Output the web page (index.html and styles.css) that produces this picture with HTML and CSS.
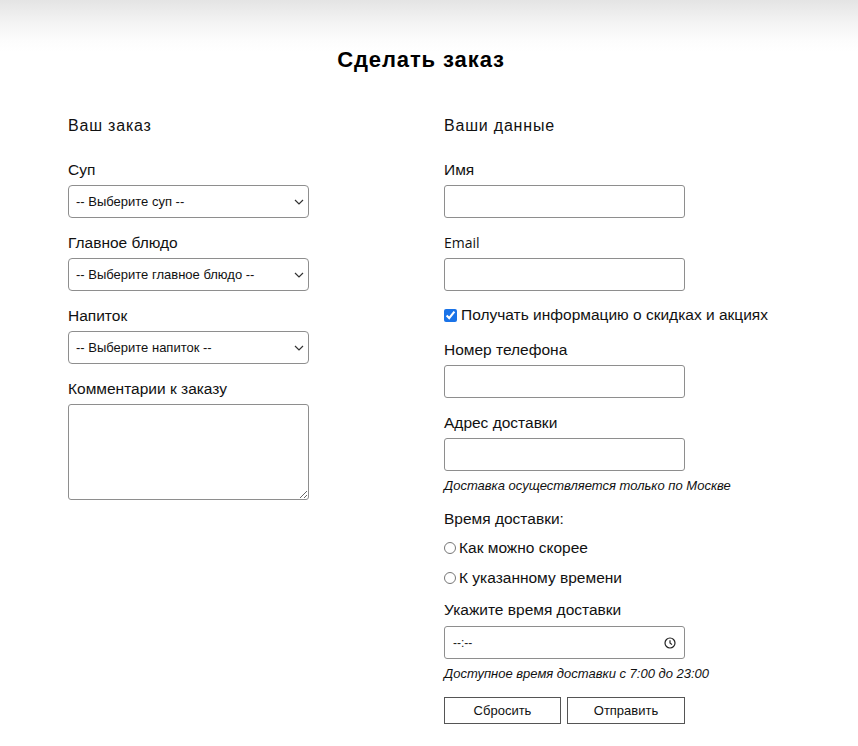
FILE: index.html
```html
<!DOCTYPE html>
<html lang="ru">
<head>
<meta charset="utf-8">
<title>Сделать заказ</title>
<link rel="stylesheet" href="styles.css">
</head>
<body>
<header class="top">
  <h1 class="title">Сделать заказ</h1>
</header>
<form class="order">
  <section class="col">
    <h2 class="col-title">Ваш заказ</h2>
    <div class="field">
      <label class="label" for="soup">Суп</label>
      <div class="select-wrap">
        <select id="soup" class="select"><option>-- Выберите суп --</option></select>
        <svg class="chev" width="10" height="6" viewBox="0 0 10 6"><path d="M1 1l4 4 4-4" fill="none" stroke="#333" stroke-width="1.2"/></svg>
      </div>
    </div>
    <div class="field">
      <label class="label" for="main">Главное блюдо</label>
      <div class="select-wrap">
        <select id="main" class="select"><option>-- Выберите главное блюдо --</option></select>
        <svg class="chev" width="10" height="6" viewBox="0 0 10 6"><path d="M1 1l4 4 4-4" fill="none" stroke="#333" stroke-width="1.2"/></svg>
      </div>
    </div>
    <div class="field">
      <label class="label" for="drink">Напиток</label>
      <div class="select-wrap">
        <select id="drink" class="select"><option>-- Выберите напиток --</option></select>
        <svg class="chev" width="10" height="6" viewBox="0 0 10 6"><path d="M1 1l4 4 4-4" fill="none" stroke="#333" stroke-width="1.2"/></svg>
      </div>
    </div>
    <div class="field">
      <label class="label" for="comment">Комментарии к заказу</label>
      <textarea id="comment" class="textarea"></textarea>
    </div>
  </section>
  <section class="col">
    <h2 class="col-title">Ваши данные</h2>
    <div class="field">
      <label class="label" for="name">Имя</label>
      <input id="name" class="input" type="text">
    </div>
    <div class="field">
      <label class="label latin" for="email">Email</label>
      <input id="email" class="input" type="text">
    </div>
    <label class="check-row"><input type="checkbox" class="check" checked> Получать информацию о скидках и акциях</label>
    <div class="field">
      <label class="label" for="phone">Номер телефона</label>
      <input id="phone" class="input" type="text">
    </div>
    <div class="field field-tight">
      <label class="label" for="addr">Адрес доставки</label>
      <input id="addr" class="input" type="text">
      <p class="note">Доставка осуществляется только по Москве</p>
    </div>
    <p class="label plain">Время доставки:</p>
    <label class="radio-row"><input type="radio" name="when" class="radio"> Как можно скорее</label>
    <label class="radio-row"><input type="radio" name="when" class="radio"> К указанному времени</label>
    <div class="field field-tight time-field">
      <label class="label" for="time">Укажите время доставки</label>
      <div class="time-wrap">
        <input id="time" class="input time" type="text" value="--:--">
        <svg class="clock" width="12" height="12" viewBox="0 0 12 12"><circle cx="6" cy="6" r="5" fill="none" stroke="#222" stroke-width="1.2"/><path d="M6 3.2V6l2 1.6" fill="none" stroke="#222" stroke-width="1.2"/></svg>
      </div>
      <p class="note">Доступное время доставки с 7:00 до 23:00</p>
    </div>
    <div class="buttons">
      <button type="reset" class="btn">Сбросить</button>
      <button type="submit" class="btn">Отправить</button>
    </div>
  </section>
</form>
</body>
</html>
```
FILE: styles.css
```css
* { box-sizing: border-box; }
body {
  margin: 0;
  background: #fff;
  color: #111;
  font-family: "Liberation Sans", Arial, sans-serif;
  font-size: 15.5px;
}
.top {
  height: 96px;
  background: linear-gradient(#e4e4e4 0px, #f3f3f3 22px, #fcfcfc 40px, #fff 52px);
  display: flex;
  justify-content: center;
  padding: 46px 16px 0 0;
}
.title {
  margin: 0;
  font-size: 22px;
  line-height: 28px;
  letter-spacing: 0.9px;
  font-weight: bold;
  color: #000;
  height: 28px;
}
.order {
  display: grid;
  grid-template-columns: 1fr 1fr;
  column-gap: 30px;
  padding: 21px 68px 0;
}
.col { display: flex; flex-direction: column; align-items: flex-start; }
.col-title {
  margin: 0 0 26px;
  font-size: 16px;
  line-height: 18px;
  letter-spacing: 0.8px;
  font-weight: normal;
}
.field { display: flex; flex-direction: column; margin-bottom: 16px; }
.field-tight { margin-bottom: 0; }
.label {
  display: block;
  margin: 0 0 6px;
  line-height: 18px;
}
.latin { font-family: "Open Sans", "Noto Sans", sans-serif; font-size: 14px; }
.plain { margin: 16px 0 0; }
.select-wrap, .time-wrap { position: relative; width: 241px; }
.select {
  appearance: none;
  -webkit-appearance: none;
  width: 241px;
  height: 33px;
  border: 1px solid #8e8e8e;
  border-radius: 4px;
  background: #fff;
  padding: 0 24px 0 7px;
  font-family: inherit;
  font-size: 13px;
  color: #111;
}
.chev { position: absolute; right: 5px; top: 14px; pointer-events: none; }
.textarea {
  width: 241px;
  height: 96px;
  border: 1px solid #8e8e8e;
  border-radius: 3px;
  margin: 0;
  font-family: inherit;
}
.input {
  width: 241px;
  height: 33px;
  border: 1px solid #8e8e8e;
  border-radius: 3px;
  padding: 0 8px;
  font-family: inherit;
  font-size: 12px;
  margin: 0;
}
.time { color: #222; }
.clock { position: absolute; right: 9px; top: 11px; }
.check-row {
  display: flex;
  align-items: center;
  line-height: 18px;
  margin: -1px 0 17px;
  gap: 4px;
}
.check { margin: 0; width: 13px; height: 13px; accent-color: #1a73e8; }
.note {
  margin: 7px 0 0;
  font-size: 13px;
  line-height: 16px;
  font-style: italic;
}
.radio-row {
  display: flex;
  align-items: center;
  line-height: 18px;
  margin-top: 11px;
  gap: 3px;
}
.radio-row + .radio-row { margin-top: 12px; }
.radio { margin: 0; width: 12px; height: 12px; }
.time-field { margin-top: 14px; }
.time-field .label { margin-bottom: 7px; }
.buttons { display: flex; gap: 6px; margin-top: 15px; }
.btn {
  width: 117px;
  height: 27px;
  border: 1px solid #555;
  border-radius: 0;
  background: #fff;
  font-family: inherit;
  font-size: 13px;
  color: #111;
}
.btn:last-child { width: 118px; }
```
